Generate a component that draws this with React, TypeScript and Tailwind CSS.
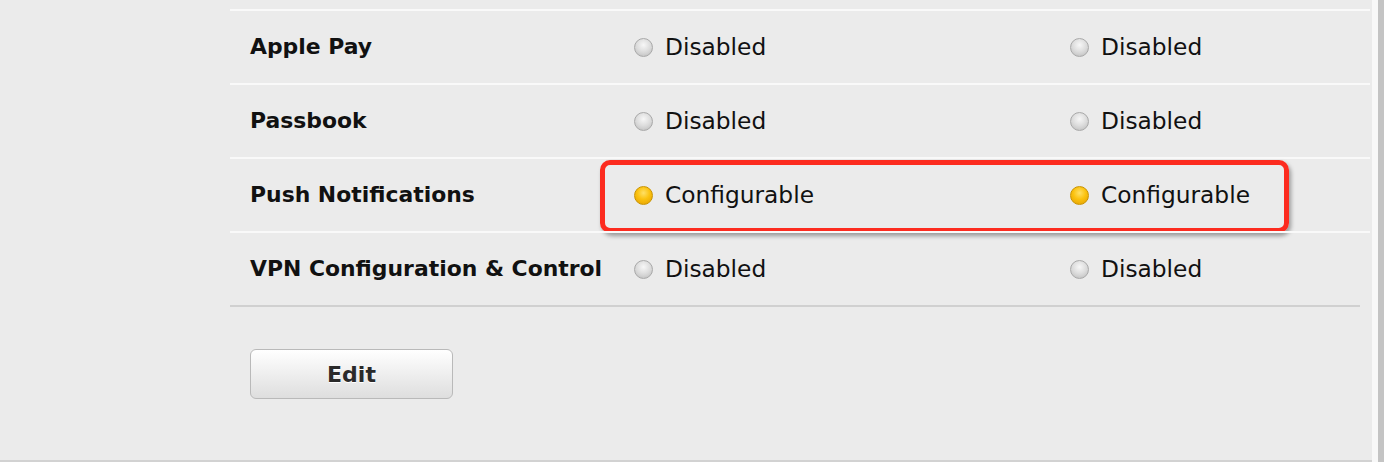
import React from "react";

type Status = "disabled" | "configurable";
type Row = { name: string; a: Status; b: Status; highlight?: boolean };

const rows: Row[] = [
  { name: "Apple Pay", a: "disabled", b: "disabled" },
  { name: "Passbook", a: "disabled", b: "disabled" },
  { name: "Push Notifications", a: "configurable", b: "configurable", highlight: true },
  { name: "VPN Configuration & Control", a: "disabled", b: "disabled" },
];

function Dot({ status }: { status: Status }) {
  if (status === "configurable") {
    return (
      <span className="h-[19px] w-[19px] shrink-0 rounded-full border border-[#c99300] bg-[radial-gradient(circle_at_50%_35%,#ffe066_0%,#fbc20f_45%,#e29d00_100%)]" />
    );
  }
  return (
    <span className="h-[19px] w-[19px] shrink-0 rounded-full border border-[#a9a9a9] bg-[radial-gradient(circle_at_50%_35%,#f7f7f7_0%,#dcdcdc_50%,#b9b9b9_100%)]" />
  );
}

function Value({ status }: { status: Status }) {
  return (
    <div className="flex items-center gap-[12px]">
      <Dot status={status} />
      <span className="text-[23.3px] text-[#111]">
        {status === "configurable" ? "Configurable" : "Disabled"}
      </span>
    </div>
  );
}

export default function App() {
  return (
    <div className="flex h-[462px] w-[1384px] bg-[#ebebeb] font-['DejaVu_Sans',sans-serif]">
      <div className="flex flex-1 flex-col border-b-2 border-[#d2d2d2] pl-[230px] pt-[9px]">
        <div className="w-[1140px]">
          {rows.map((r) => (
            <div
              key={r.name}
              className="relative grid h-[74px] grid-cols-[404px_436px_1fr] items-center border-t-2 border-[#f9f9f9]"
            >
              <span className="pl-[20px] text-[21.9px] font-bold text-[#111]">{r.name}</span>
              <Value status={r.a} />
              <Value status={r.b} />
              {r.highlight && (
                <div className="pointer-events-none absolute left-[370px] top-[1px] h-[73px] w-[689px] rounded-[10px] border-[5px] border-[#fc2b1f] shadow-[2px_3px_4px_rgba(0,0,0,0.35)]" />
              )}
            </div>
          ))}
        </div>
        <div className="h-[2px] w-[1130px] bg-[#d0d0d0]" />
        <div className="pl-[20px] pt-[42px]">
          <button
            type="button"
            className="h-[50px] w-[203px] rounded-[6px] border border-[#b9b9b9] bg-gradient-to-b from-white to-[#dedede] text-[22px] font-bold text-[#2a2a2a] [text-shadow:0_1px_0_#fff]"
          >
            Edit
          </button>
        </div>
      </div>
      <div className="w-[6px] bg-[#f8f8f8]" />
      <div className="w-[6px] bg-[#c4c4c4]" />
    </div>
  );
}
